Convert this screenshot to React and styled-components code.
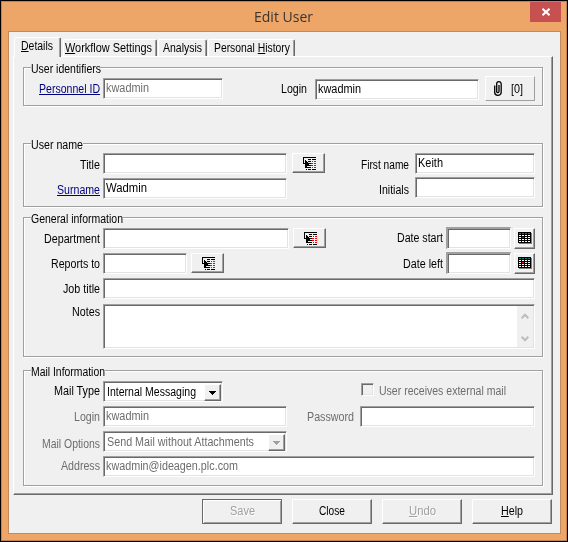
import React, { useLayoutEffect, useRef, useState } from "react";
import styled, { createGlobalStyle, css } from "styled-components";

const GlobalStyle = createGlobalStyle`
  * { box-sizing: border-box; }
  body {
    margin: 0;
    background: #000;
    font-family: "Liberation Sans", Arial, sans-serif;
    font-size: 12.5px;
    color: #000;
  }
`;

const sunken = css`
  border: 1px solid;
  border-color: #a0a0a0 #fff #fff #a0a0a0;
  box-shadow: inset 1px 1px 0 #696969, inset -1px -1px 0 #e3e3e3;
`;

const raised = css`
  border: 1px solid;
  border-color: #fff #696969 #696969 #fff;
  box-shadow: inset -1px -1px 0 #a0a0a0;
`;

const Frame = styled.div`
  width: 568px;
  height: 542px;
  padding: 1px 6px 7px 7px;
  border: 1px solid #000;
  background: #eda568;
  box-shadow: inset 1px 1px 0 #c58250, inset -1px -1px 0 #c58250;
`;

const TitleBar = styled.div`
  display: flex;
  height: 29px;
  justify-content: space-between;
  align-items: flex-start;
`;

const Title = styled.div`
  padding: 4px 0 0 246px;
  font-family: "Open Sans", "Noto Sans", sans-serif;
  font-size: 14.5px;
  color: #3b3530;
`;

const CloseBox = styled.button`
  width: 31px;
  height: 20px;
  margin: 0;
  padding: 0;
  border: 0;
  background: #c75050;
  display: flex;
  align-items: center;
  justify-content: center;
`;

const Client = styled.div`
  height: 503px;
  border: 1px solid #c08a5e;
  background: #f0f0f0;
  padding: 5px 6px 0 4px;
`;

const TabList = styled.div`
  display: flex;
  align-items: flex-end;
  height: 19px;
  padding-left: 1px;
`;

const Tab = styled.div`
  display: flex;
  align-items: flex-start;
  width: ${(p) => p.$w}px;
  height: ${(p) => (p.$active ? 20 : 17)}px;
  margin-bottom: ${(p) => (p.$active ? -1 : 0)}px;
  margin-left: ${(p) => p.$ml || 0}px;
  padding: 1px 0 0 ${(p) => p.$pl}px;
  background: #f0f0f0;
  border-top: 1px solid #fff;
  border-left: 1px solid #fff;
  border-right: 1px solid #696969;
  border-radius: 2px 2px 0 0;
  box-shadow: inset -1px 0 0 #a0a0a0;
  position: relative;
`;

const Panel = styled.div`
  height: 439px;
  width: 540px;
  padding: 10px 9px 0;
  ${raised}
`;

const Group = styled.div`
  position: relative;
  width: 520px;
  height: ${(p) => p.$h}px;
  margin-bottom: ${(p) => p.$mb || 0}px;
  padding-top: ${(p) => p.$pt}px;
  border: 1px solid #a0a0a0;
  box-shadow: 1px 1px 0 #fff, inset 1px 1px 0 #fff;
`;

const Legend = styled.div`
  display: flex;
  position: absolute;
  left: 7px;
  top: -6px;
  height: 14px;
  background: #f0f0f0;
`;

const Row = styled.div`
  display: flex;
  align-items: flex-start;
  height: ${(p) => p.$h || 25}px;
`;

const Label = styled.label`
  display: flex;
  justify-content: flex-end;
  width: ${(p) => p.$w || 76}px;
  padding-top: ${(p) => p.$t}px;
  color: ${(p) => (p.$link ? "#000080" : p.$off ? "#6d6d6d" : "#000")};
  flex: none;
`;

const Field = styled.div`
  display: flex;
  justify-content: space-between;
  flex: none;
  width: ${(p) => p.$w}px;
  height: ${(p) => p.$h || 21}px;
  margin-left: ${(p) => (p.$ml === undefined ? 3 : p.$ml)}px;
  margin-top: ${(p) => p.$mt || 0}px;
  padding: ${(p) => p.$pt || 2}px 1px 1px ${(p) => p.$pl || 2}px;
  background: #fff;
  color: ${(p) => (p.$off ? "#6d6d6d" : "#000")};
  ${sunken}
`;

const DateField = styled(Field)`
  border-width: 2px 1px 1px 2px;
`;

const IconButton = styled.button`
  display: flex;
  align-items: flex-start;
  flex: none;
  width: 33px;
  height: 20px;
  margin: 0 0 0 ${(p) => p.$ml}px;
  padding: 3px 0 0 10px;
  font: inherit;
  color: #000;
  background: #f0f0f0;
  ${raised}
`;

const DateButton = styled(IconButton)`
  width: 21px;
  height: 21px;
  padding: 3px 0 0 3px;
`;

const AttachButton = styled(IconButton)`
  align-items: center;
  gap: 9px;
  width: 50px;
  height: 25px;
  padding: 0 0 0 8px;
  border-color: #fff #a0a0a0 #a0a0a0 #fff;
  box-shadow: none;
`;

const DropArrow = styled.div`
  display: flex;
  align-items: center;
  justify-content: center;
  width: 17px;
  height: 17px;
  margin-top: -1px;
  background: #f0f0f0;
  ${raised}
`;

const ScrollBar = styled.div`
  display: flex;
  flex-direction: column;
  justify-content: space-between;
  align-items: center;
  width: 16px;
  height: 41px;
  margin-top: -1px;
  padding: 7px 0 5px;
  background: #f0f0f0;
`;

const CheckBox = styled.div`
  width: 13px;
  height: 13px;
  margin: 2px 5px 0 138px;
  background: #f0f0f0;
  ${sunken}
`;

const Muted = styled.div`
  display: flex;
  color: #6d6d6d;
  padding-top: 3px;
`;

const Footer = styled.div`
  display: flex;
  gap: 10px;
  padding: 4px 0 0 189px;
`;

const Button = styled.button`
  width: 80px;
  height: 25px;
  margin: 0;
  padding: 0 0 1px;
  font: inherit;
  background: #f0f0f0;
  color: ${(p) => (p.disabled ? "#a0a0a0" : "#000")};
  text-shadow: ${(p) => (p.disabled ? "1px 1px 0 #fff" : "none")};
  ${raised}
  ${(p) =>
    p.$default &&
    css`
      border-color: #696969;
      box-shadow: inset 1px 1px 0 #fff, inset -1px -1px 0 #a0a0a0;
    `}
`;

const FitBox = styled.span`
  display: inline-block;
  height: 14px;
  line-height: 14px;
  white-space: nowrap;
  text-align: left;
  vertical-align: middle;
`;

const FitInner = styled.span`
  display: inline-block;
  transform-origin: 0 0;
`;

// condenses a text run to the given width, like the old bitmap dialog font
const Fit = ({ w, children }) => {
  const inner = useRef(null);
  const [scale, setScale] = useState(1);

  useLayoutEffect(() => {
    const natural = inner.current.getBoundingClientRect().width;
    if (natural) setScale(w / natural);
  }, [w]);

  return (
    <FitBox style={{ width: w }}>
      <FitInner ref={inner} style={{ transform: `scaleX(${scale})` }}>
        {children}
      </FitInner>
    </FitBox>
  );
};

const ListIcon = () => (
  <svg width="13" height="13" viewBox="0 0 13 13" shapeRendering="crispEdges">
    <path
      fill="#000"
      d="M0 0h13v1H0zM0 0h1v7H0zM5 2h3v1H5zM9 2h4v1H9zM0 6h3v1H0zM2 3h1v8H2zM3 4h1v6H3zM4 5h1v4H4zM5 6h1v2H5zM5 4h3v1H5zM6 6h2v1H6zM5 8h3v1H5zM3 10h5v1H3zM3 12h1v1H3zM5 12h3v1H5zM9 12h4v1H9z"
    />
    <path
      fill="#f00"
      d="M9 4h1v1H9zM11 4h2v1h-2zM8 6h2v1H8zM11 6h2v1h-2zM8 8h2v1H8zM11 8h2v1h-2zM9 10h1v1H9zM11 10h2v1h-2z"
    />
  </svg>
);

const CalendarIcon = () => (
  <svg width="14" height="13" viewBox="0 0 14 13" shapeRendering="crispEdges">
    <rect x="1" y="1" width="13" height="11" fill="#808080" />
    <rect width="13" height="11" fill="#000" />
    {[1, 3, 5, 7, 9].map((y) =>
      [1, 4, 7, 10].map((x) => (
        <rect
          key={`${x}-${y}`}
          x={x}
          y={y}
          width="2"
          height="1"
          fill={y === 1 ? "#008080" : x === 4 && y === 5 ? "#f00" : "#fff"}
        />
      ))
    )}
  </svg>
);

const ClipIcon = () => (
  <svg width="8" height="15" viewBox="0 0 8 15" fill="none" stroke="#000" strokeWidth="1.3">
    <path d="M.7 4.5v7Q.7 14.3 3.8 14.3T7.2 11.5V3.5Q7.2.7 4.9.7T2.7 3v7.5q0 1.2 1.1 1.2T5 10.5V4" />
  </svg>
);

const Down = ({ off }) => (
  <svg width="7" height="4" viewBox="0 0 7 4" shapeRendering="crispEdges">
    <path d="M0 0h7v1H0zM1 1h5v1H1zM2 2h3v1H2zM3 3h1v1H3z" fill={off ? "#a0a0a0" : "#000"} />
  </svg>
);

const Chevron = ({ down }) => (
  <svg width="8" height="6" viewBox="0 0 8 6" fill="none" stroke="#bcbcbc" strokeWidth="2">
    <path d={down ? "M.7.8 4 4.2 7.3.8" : "M.7 5.2 4 1.8l3.3 3.4"} />
  </svg>
);

export default function App() {
  return (
    <>
      <GlobalStyle />
      <Frame>
        <TitleBar>
          <Title>
            <Fit w={59}>Edit User</Fit>
          </Title>
          <CloseBox>
            <svg width="8" height="8" viewBox="0 0 8 8" stroke="#fff" strokeWidth="1.9">
              <path d="M.5.8l7 6.4M7.5.8l-7 6.4" />
            </svg>
          </CloseBox>
        </TitleBar>
        <Client>
          <TabList>
            <Tab $active $w={47} $pl={6}>
              <Fit w={32}><u>D</u>etails</Fit>
            </Tab>
            <Tab $w={94} $ml={2} $pl={1}>
              <Fit w={87}><u>W</u>orkflow Settings</Fit>
            </Tab>
            <Tab $w={49} $ml={1} $pl={4}>
              <Fit w={39}>Analysis</Fit>
            </Tab>
            <Tab $w={87} $ml={1} $pl={5}>
              <Fit w={76}>Personal <u>H</u>istory</Fit>
            </Tab>
          </TabList>
          <Panel>
            <Group $h={39} $mb={37} $pt={8}>
              <Legend><Fit w={70}>User identifiers</Fit></Legend>
              <Row>
                <Label $link $t={6}><Fit w={61}><u>Personnel ID</u></Fit></Label>
                <Field $w={120} $off $mt={2}><Fit w={43}>kwadmin</Fit></Field>
                <Label $w={84} $t={6}><Fit w={26}>Login</Fit></Label>
                <Field $w={164} $ml={8} $mt={3}><Fit w={43}>kwadmin</Fit></Field>
                <AttachButton $ml={6}>
                  <ClipIcon />
                  <Fit w={12}>[0]</Fit>
                </AttachButton>
              </Row>
            </Group>

            <Group $h={64} $mb={10} $pt={9}>
              <Legend><Fit w={52}>User name</Fit></Legend>
              <Row>
                <Label $t={5}><Fit w={20}>Title</Fit></Label>
                <Field $w={184} />
                <IconButton $ml={5}><ListIcon /></IconButton>
                <Label $w={84} $t={5}><Fit w={48}>First name</Fit></Label>
                <Field $w={120} $ml={6}><Fit w={25}>Keith</Fit></Field>
              </Row>
              <Row>
                <Label $link $t={5}><Fit w={43}><u>Surname</u></Fit></Label>
                <Field $w={184}><Fit w={41}>Wadmin</Fit></Field>
                <Label $w={122} $t={5}><Fit w={30}>Initials</Fit></Label>
                <Field $w={120} $ml={6} $mt={-1} />
              </Row>
            </Group>

            <Group $h={140} $mb={13} $pt={10}>
              <Legend><Fit w={92}>General information</Fit></Legend>
              <Row>
                <Label $t={4}><Fit w={56}>Department</Fit></Label>
                <Field $w={186} />
                <IconButton $ml={4}><ListIcon /></IconButton>
                <Label $w={117} $t={3}><Fit w={46}>Date start</Fit></Label>
                <DateField $w={65} $mt={-1} $h={22} />
                <DateButton $ml={3}><CalendarIcon /></DateButton>
              </Row>
              <Row>
                <Label $t={4}><Fit w={49}>Reports to</Fit></Label>
                <Field $w={84} />
                <IconButton $ml={4}><ListIcon /></IconButton>
                <Label $w={219} $t={4}><Fit w={40}>Date left</Fit></Label>
                <DateField $w={65} $mt={-1} $h={22} />
                <DateButton $ml={3}><CalendarIcon /></DateButton>
              </Row>
              <Row>
                <Label $t={4}><Fit w={37}>Job title</Fit></Label>
                <Field $w={432} />
              </Row>
              <Row $h={46}>
                <Label $t={2}><Fit w={28}>Notes</Fit></Label>
                <Field $w={432} $h={45} $mt={1}>
                  <span />
                  <ScrollBar>
                    <Chevron />
                    <Chevron down />
                  </ScrollBar>
                </Field>
              </Row>
            </Group>

            <Group $h={116} $pt={10}>
              <Legend><Fit w={74}>Mail Information</Fit></Legend>
              <Row>
                <Label $t={3}><Fit w={46}>Mail Type</Fit></Label>
                <Field $w={120} $pl={3} $pt={3}>
                  <Fit w={89}>Internal Messaging</Fit>
                  <DropArrow><Down /></DropArrow>
                </Field>
                <CheckBox />
                <Muted><Fit w={127}>User receives external mail</Fit></Muted>
              </Row>
              <Row>
                <Label $off $t={4}><Fit w={26}>Login</Fit></Label>
                <Field $w={184} $off><Fit w={43}>kwadmin</Fit></Field>
                <Label $off $w={67} $t={4}><Fit w={47}>Password</Fit></Label>
                <Field $w={175} $ml={6} />
              </Row>
              <Row>
                <Label $off $t={6}><Fit w={58}>Mail Options</Fit></Label>
                <Field $w={184} $off $pl={3} $pt={3}>
                  <Fit w={147}>Send Mail without Attachments</Fit>
                  <DropArrow><Down off /></DropArrow>
                </Field>
              </Row>
              <Row>
                <Label $off $t={3}><Fit w={39}>Address</Fit></Label>
                <Field $w={432} $off><Fit w={132}>kwadmin@ideagen.plc.com</Fit></Field>
              </Row>
            </Group>
          </Panel>
          <Footer>
            <Button disabled $default><Fit w={25}>Save</Fit></Button>
            <Button><Fit w={26}>Close</Fit></Button>
            <Button disabled><Fit w={27}><u>U</u>ndo</Fit></Button>
            <Button><Fit w={22}><u>H</u>elp</Fit></Button>
          </Footer>
        </Client>
      </Frame>
    </>
  );
}
